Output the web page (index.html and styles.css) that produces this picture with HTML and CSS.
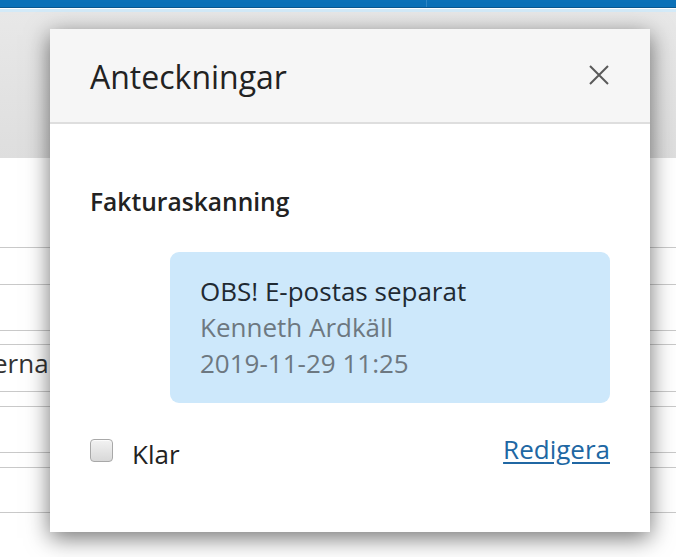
FILE: index.html
```html
<!DOCTYPE html>
<html lang="sv">
<head>
    <meta charset="UTF-8">
    <meta name="viewport" content="width=device-width, initial-scale=1.0">
    <title>Anteckningar</title>
    <link rel="stylesheet" href="styles.css">
</head>
<body>

    <!-- Sidan bakom dialogen -->
    <div class="topbar">
        <div class="topbar-left"></div>
        <div class="topbar-right"></div>
    </div>
    <div class="topbar-line"></div>
    <div class="toolbar"></div>

    <div class="rows">
        <div class="row row-first"></div>
        <div class="row h37"></div>
        <div class="row h46"></div>
        <div class="row h14"></div>
        <div class="row h47"><span class="cell-text">erna</span></div>
        <div class="row h15"></div>
        <div class="row h46"></div>
        <div class="row h15"></div>
        <div class="row h45"></div>
    </div>

    <!-- Dialog -->
    <div class="modal">
        <div class="modal-header">
            <h2 class="modal-title">Anteckningar</h2>
            <button class="close" aria-label="Stäng">
                <svg width="20" height="20" viewBox="0 0 20 20">
                    <path d="M1 1 L19 19 M19 1 L1 19" stroke="#5a5a5a" stroke-width="2" fill="none"/>
                </svg>
            </button>
        </div>
        <div class="modal-body">
            <h3 class="group-title">Fakturaskanning</h3>

            <div class="note">
                <div class="note-text">OBS! E-postas separat</div>
                <div class="note-meta">Kenneth Ardkäll</div>
                <div class="note-meta">2019-11-29 11:25</div>
            </div>

            <div class="modal-footer">
                <label class="check">
                    <input type="checkbox">
                    <span>Klar</span>
                </label>
                <a href="#" class="edit-link">Redigera</a>
            </div>
        </div>
    </div>

</body>
</html>
```

FILE: styles.css
```css
* {
    margin: 0;
    padding: 0;
    box-sizing: border-box;
}

body {
    font-family: "Open Sans", "Noto Sans", Arial, sans-serif;
    background-color: #fff;
    color: #222;
    width: 676px;
    height: 557px;
    overflow: hidden;
    position: relative;
}

/* Bakgrundssidan */
.topbar {
    display: flex;
    height: 8px;
    background-color: #0b71b8;
    border-bottom: 1px solid #0a5890;
}

.topbar-left {
    width: 427px;
    border-right: 1px solid #2f86c4;
}

.topbar-line {
    height: 3px;
    margin-top: 1px;
    background-color: #d3eaf8;
}

.toolbar {
    height: 146px;
    background: linear-gradient(#e8e8e8, #dedede);
}

.row {
    border-bottom: 1px solid #c9c9c9;
    font-size: 26px;
    color: #333;
}

.row-first { height: 90px; }
.h14 { height: 14px; }
.h15 { height: 15px; }
.h37 { height: 37px; }
.h45 { height: 45px; }
.h46 { height: 46px; }
.h47 { height: 47px; }

.cell-text {
    display: block;
    line-height: 36px;
    padding-top: 0;
    margin-left: -7px;
}

/* Dialog */
.modal {
    position: absolute;
    left: 50px;
    top: 29px;
    width: 600px;
    height: 503px;
    background-color: #fff;
    box-shadow: 0 6px 22px rgba(0, 0, 0, 0.55);
}

.modal-header {
    display: flex;
    align-items: center;
    justify-content: space-between;
    height: 95px;
    padding: 0 40px 2px 40px;
    background-color: #f6f6f6;
    border-bottom: 2px solid #dedede;
}

.modal-title {
    font-size: 32px;
    font-weight: 400;
    color: #222;
    line-height: 40px;
    margin-top: 4px;
}

.close {
    background: none;
    border: none;
    width: 20px;
    height: 20px;
    margin-right: 1px;
    cursor: pointer;
}

.modal-body {
    padding: 60px 40px 0 40px;
    font-size: 26px;
    line-height: 36px;
}

.group-title {
    font-size: 24.6px;
    font-weight: 600;
    line-height: 36px;
    color: #222;
}

.note {
    margin: 32px 0 0 auto;
    width: 440px;
    padding: 21px 30px 22px;
    background-color: #cde8fb;
    border-radius: 9px;
}

.note-text {
    color: #1f2a33;
}

.note-meta {
    color: #6d7881;
}

.modal-footer {
    display: flex;
    align-items: center;
    justify-content: space-between;
    margin-top: 23px;
}

.check {
    display: flex;
    align-items: center;
    gap: 19px;
}

.check input {
    appearance: none;
    width: 23px;
    height: 23px;
    border: 1px solid #a8a8a8;
    border-radius: 4px;
    background: linear-gradient(#f2f2f2, #d8d8d8);
    box-shadow: inset 0 1px 1px rgba(255, 255, 255, 0.8);
    margin-top: 2px;
}

.check span {
    padding-top: 10px;
    color: #222;
}

.edit-link {
    color: #2067a3;
    text-decoration: underline;
    text-underline-offset: 3px;
}
```
